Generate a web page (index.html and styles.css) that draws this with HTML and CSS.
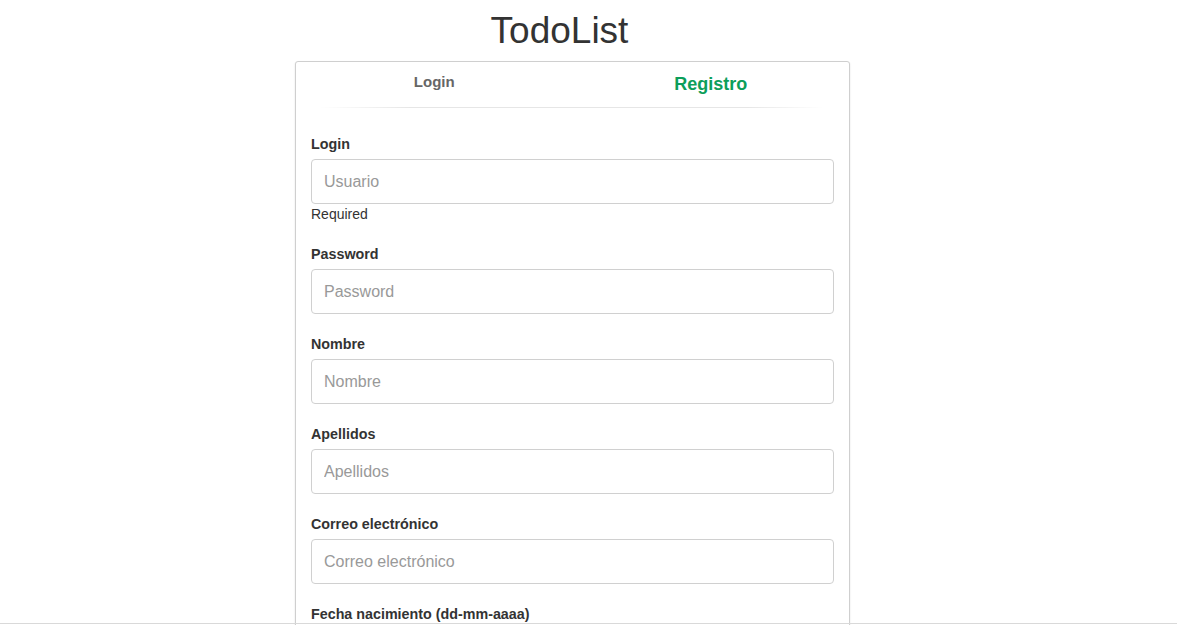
FILE: index.html
```html
<!DOCTYPE html>
<html lang="es">
<head>
<meta charset="utf-8">
<title>TodoList</title>
<link rel="stylesheet" href="styles.css">
</head>
<body>
<div class="page">
  <h1 class="title">TodoList</h1>
  <div class="card">
    <div class="tabs">
      <div class="tab tab-login">Login</div>
      <div class="tab tab-active">Registro</div>
    </div>
    <div class="tab-line"></div>
    <form class="form">
      <div class="group">
        <label class="label">Login</label>
        <input class="input" type="text" placeholder="Usuario">
        <div class="help">Required</div>
      </div>
      <div class="group">
        <label class="label">Password</label>
        <input class="input" type="password" placeholder="Password">
      </div>
      <div class="group">
        <label class="label">Nombre</label>
        <input class="input" type="text" placeholder="Nombre">
      </div>
      <div class="group">
        <label class="label">Apellidos</label>
        <input class="input" type="text" placeholder="Apellidos">
      </div>
      <div class="group">
        <label class="label">Correo electrónico</label>
        <input class="input" type="text" placeholder="Correo electrónico">
      </div>
      <div class="group">
        <label class="label">Fecha nacimiento (dd-mm-aaaa)</label>
        <input class="input" type="text" placeholder="Fecha nacimiento">
      </div>
    </form>
  </div>
</div>
<div class="bottom-line"></div>
</body>
</html>
```
FILE: styles.css
```css
html, body {
  margin: 0;
  padding: 0;
  background: #fff;
  font-family: "Liberation Sans", Arial, sans-serif;
  color: #333;
}

.page {
  width: 555px;
  margin-left: 295px;
}

.title {
  margin: 11px 0 10px;
  padding-right: 26px;
  text-align: center;
  font-size: 37px;
  line-height: 40px;
  font-weight: normal;
  color: #333;
}

.card {
  border: 1px solid #cfcfcf;
  border-radius: 3px;
  box-shadow: 0 1px 2px rgba(0, 0, 0, 0.12);
  background: #fff;
}

.tabs {
  display: grid;
  grid-template-columns: 1fr 1fr;
  align-items: start;
  height: 45px;
  box-sizing: border-box;
  padding-top: 10px;
}

.tab {
  text-align: center;
  font-weight: bold;
}

.tab-login {
  font-size: 15px;
  line-height: 20px;
  color: #666;
}

.tab-active {
  font-size: 18px;
  line-height: 24px;
  color: #0c9e5a;
}

.tab-line {
  height: 1px;
  margin: 0 26px 0 24px;
  background: linear-gradient(to right, rgba(230,230,230,0), #e6e6e6 18%, #e6e6e6 85%, rgba(230,230,230,0));
}

.form {
  padding: 25px 15px 20px;
}

.group {
  margin-bottom: 19px;
}

.label {
  display: block;
  font-size: 14.3px;
  line-height: 20px;
  padding-top: 1px;
  font-weight: bold;
  color: #333;
  margin-bottom: 5px;
}

.input {
  display: block;
  width: 100%;
  height: 45px;
  box-sizing: border-box;
  padding: 0 12px;
  border: 1px solid #d0d0d0;
  border-radius: 4px;
  font-family: "Liberation Sans", Arial, sans-serif;
  font-size: 16px;
  color: #555;
  background: #fff;
  outline: none;
}

.input::placeholder {
  color: #999;
}

.help {
  font-size: 14px;
  line-height: 20px;
  color: #333;
}

.bottom-line {
  position: fixed;
  left: 0;
  right: 0;
  bottom: 1px;
  height: 1px;
  background: #d9d9d9;
}
```
